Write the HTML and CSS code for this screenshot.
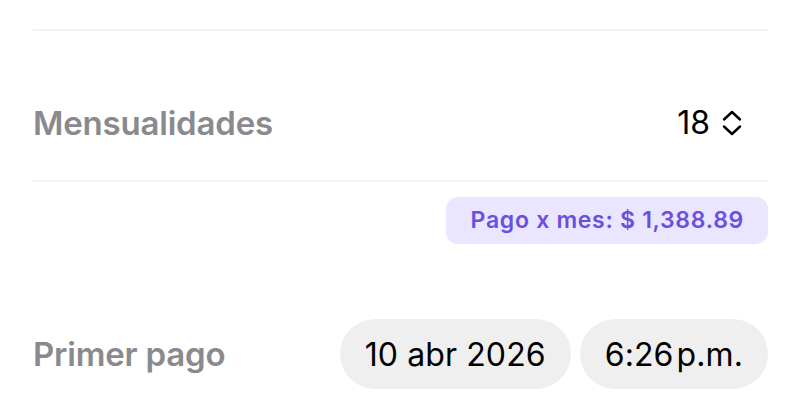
FILE: index.html
```html
<!DOCTYPE html>
<html lang="es">
<head>
<meta charset="utf-8">
<link rel="stylesheet" href="styles.css">
</head>
<body>
<div class="form">
  <div class="divider top"></div>
  <div class="row row-months">
    <span class="label">Mensualidades</span>
    <span class="stepper">
      <span class="value">18</span>
      <svg class="chev" width="22" height="28" viewBox="0 0 22 28" aria-hidden="true">
        <path d="M3 10.5 L11 3 L19 10.5" fill="none" stroke="#000" stroke-width="2.4" stroke-linecap="round" stroke-linejoin="round"/>
        <path d="M3 17.5 L11 25 L19 17.5" fill="none" stroke="#000" stroke-width="2.4" stroke-linecap="round" stroke-linejoin="round"/>
      </svg>
    </span>
  </div>
  <div class="divider"></div>
  <div class="badge-row">
    <span class="badge">Pago x mes: $ 1,388.89</span>
  </div>
  <div class="row row-date">
    <span class="label">Primer pago</span>
    <span class="pills">
      <span class="pill">10 abr 2026</span>
      <span class="pill">6:26<span class="ampm">p.m.</span></span>
    </span>
  </div>
</div>
</body>
</html>
```
FILE: styles.css
```css
html, body {
  margin: 0;
  padding: 0;
  background: #ffffff;
}
body {
  font-family: Inter, "Noto Sans", "Liberation Sans", sans-serif;
  width: 800px;
  height: 400px;
  overflow: hidden;
}
.form {
  padding: 29px 32px 0 33px;
}
.divider {
  height: 2px;
  background: #f2f2f3;
}
.row {
  display: flex;
  align-items: center;
  justify-content: space-between;
}
.row-months {
  height: 115px;
  padding-top: 34px;
}
.label {
  font-size: 33px;
  font-weight: 600;
  color: #8a8a8e;
  letter-spacing: -0.2px;
}
.stepper {
  display: flex;
  align-items: center;
  gap: 11px;
  padding-right: 25px;
}
.value {
  font-size: 32px;
  color: #000;
}
.badge-row {
  display: flex;
  justify-content: flex-end;
  padding-top: 15px;
}
.badge {
  background: #ebe6ff;
  color: #6a4fe0;
  font-size: 23px;
  font-weight: 600;
  letter-spacing: 0.7px;
  border-radius: 12px;
  padding: 10px 24px 11px 25px;
  line-height: 26px;
}
.row-date {
  margin-top: 75px;
}
.pills {
  display: flex;
  gap: 9px;
}
.pill {
  background: #efefef;
  border-radius: 35px;
  height: 70px;
  display: flex;
  align-items: center;
  padding: 0 25px;
  font-size: 32px;
  letter-spacing: 0.1px;
  color: #000;
}
.ampm {
  margin-left: 3px;
}
```
